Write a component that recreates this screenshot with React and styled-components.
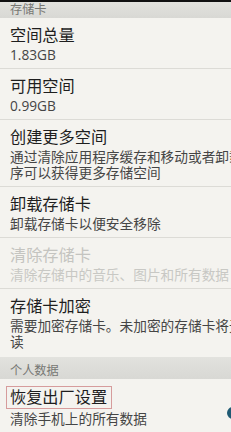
import React from 'react';
import styled, { createGlobalStyle } from 'styled-components';

const GlobalStyle = createGlobalStyle`
  html, body {
    margin: 0;
    padding: 0;
    background: #f4f3ef;
    overflow: hidden;
  }
  body {
    font-family: "Open Sans", "Noto Sans CJK SC", sans-serif;
  }
`;

const sections = [
  {
    header: '存储卡',
    headerHeight: 16,
    items: [
      { title: '空间总量', lines: ['1.83GB'] },
      { title: '可用空间', lines: ['0.99GB'] },
      {
        title: '创建更多空间',
        lines: ['通过清除应用程序缓存和移动或者卸载程', '序可以获得更多存储空间'],
      },
      { title: '卸载存储卡', lines: ['卸载存储卡以便安全移除'] },
      { title: '清除存储卡', lines: ['清除存储中的音乐、图片和所有数据'], disabled: true },
      { title: '存储卡加密', lines: ['需要加密存储卡。未加密的存储卡将无法', '读'], last: true },
    ],
  },
  {
    header: '个人数据',
    headerHeight: 22,
    items: [{ title: '恢复出厂设置', lines: ['清除手机上的所有数据'], boxed: true, knob: true }],
  },
];

function App() {
  return (
    <>
      <GlobalStyle />
      <Screen>
        <TopEdge />
        {sections.map((section) => (
          <section key={section.header}>
            <Header $height={section.headerHeight}>{section.header}</Header>
            {section.items.map((item) => (
              <Item key={item.title} $last={item.last}>
                <Title $disabled={item.disabled} $boxed={item.boxed}>
                  {item.title}
                </Title>
                <Summary $disabled={item.disabled}>
                  {item.lines.map((line) => (
                    <Line key={line}>{line}</Line>
                  ))}
                </Summary>
                {item.knob && <Knob />}
              </Item>
            ))}
          </section>
        ))}
      </Screen>
    </>
  );
}

export default App;

const Screen = styled.div`
  width: 231px;
  height: 432px;
  overflow: hidden;
  background: #f4f3ef;
`;

const TopEdge = styled.div`
  height: 2px;
  background: #111;
`;

const Header = styled.div`
  box-sizing: border-box;
  height: ${({ $height }) => $height}px;
  display: flex;
  align-items: flex-end;
  overflow: hidden;
  padding: 0 0 1px 10px;
  background: linear-gradient(#e2e2de, #d8d8d4);
  color: #777773;
  font-size: 12.2px;
  line-height: 14px;
`;

const Item = styled.div`
  position: relative;
  padding: 7px 0 ${({ $last }) => ($last ? '7px' : '5px')} 10px;
  border-bottom: ${({ $last }) => ($last ? 'none' : '1px solid #dcdbd6')};
  white-space: nowrap;
  overflow: hidden;
`;

const Title = styled.div`
  display: ${({ $boxed }) => ($boxed ? 'inline-block' : 'block')};
  font-size: 16.2px;
  line-height: 20px;
  color: ${({ $disabled }) => ($disabled ? '#c4c4c0' : '#1e1e1e')};
  ${({ $boxed }) =>
    $boxed &&
    `
    margin-left: -4px;
    padding: 0 4px 1px 3px;
    border: 1px solid #d69c9c;
  `}
`;

const Summary = styled.div`
  margin-top: 2px;
  font-size: 13.7px;
  line-height: 16px;
  color: ${({ $disabled }) => ($disabled ? '#c8c8c4' : '#454545')};
`;

const Line = styled.div`
  white-space: nowrap;
`;

const Knob = styled.div`
  position: absolute;
  right: -8px;
  top: 28px;
  width: 12px;
  height: 12px;
  border-radius: 50%;
  background: #1f5a73;
`;
